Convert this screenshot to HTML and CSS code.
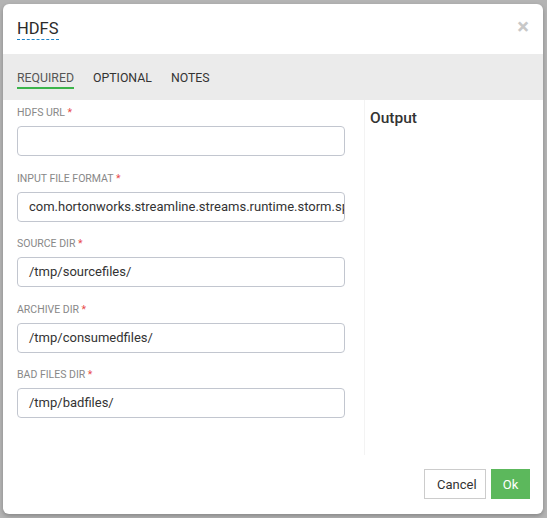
FILE: index.html
```html
<!DOCTYPE html>
<html>
<head>
<meta charset="utf-8">
<link rel="stylesheet" href="styles.css">
</head>
<body>
<div class="modal">
  <div class="modal-header">
    <span class="title">HDFS</span>
    <span class="close">&times;</span>
  </div>
  <div class="tabs">
    <span class="tab active">REQUIRED</span>
    <span class="tab">OPTIONAL</span>
    <span class="tab">NOTES</span>
  </div>
  <div class="content">
    <div class="form">
      <div class="field">
        <label>HDFS URL <span class="req">*</span></label>
        <div class="input"></div>
      </div>
      <div class="field">
        <label>INPUT FILE FORMAT <span class="req">*</span></label>
        <div class="input">com.hortonworks.streamline.streams.runtime.storm.spout.hdfs</div>
      </div>
      <div class="field">
        <label>SOURCE DIR <span class="req">*</span></label>
        <div class="input">/tmp/sourcefiles/</div>
      </div>
      <div class="field">
        <label>ARCHIVE DIR <span class="req">*</span></label>
        <div class="input">/tmp/consumedfiles/</div>
      </div>
      <div class="field">
        <label>BAD FILES DIR <span class="req">*</span></label>
        <div class="input">/tmp/badfiles/</div>
      </div>
    </div>
    <div class="output">
      <h4>Output</h4>
    </div>
  </div>
  <div class="footer">
    <button class="btn btn-default">Cancel</button>
    <button class="btn btn-success">Ok</button>
  </div>
</div>
</body>
</html>
```

FILE: styles.css
```css
html, body {
  margin: 0;
  padding: 0;
}
body {
  background: #b4b4b4;
  font-family: Roboto, "Liberation Sans", sans-serif;
  width: 547px;
  height: 518px;
  overflow: hidden;
}
.modal {
  margin: 4px 0 0 3px;
  width: 540px;
  height: 510px;
  background: #fff;
  border-radius: 6px;
  box-shadow: 0 2px 4px rgba(0,0,0,0.25);
  display: flex;
  flex-direction: column;
  overflow: hidden;
}
.modal-header {
  height: 50px;
  display: flex;
  align-items: flex-start;
  justify-content: space-between;
  padding: 0 14px;
}
.title {
  margin-top: 15px;
  font-size: 16.5px;
  color: #2b2b2b;
  line-height: 19px;
  border-bottom: 1px dashed #1b84c9;
  padding-bottom: 1px;
}
.close {
  margin-top: 12px;
  font-size: 22px;
  font-weight: bold;
  color: #c8c8c8;
  line-height: 22px;
}
.tabs {
  height: 46px;
  background: #ebebeb;
  display: flex;
  align-items: flex-start;
  padding: 0 14px;
  gap: 19px;
}
.tab {
  margin-top: 16px;
  font-size: 12.3px;
  color: #333;
  line-height: 16px;
  padding-bottom: 1px;
}
.tab.active {
  color: #555;
  border-bottom: 2px solid #3cb44b;
}
.content {
  display: flex;
  height: 355px;
}
.form {
  width: 328px;
  padding: 5px 19px 0 14px;
}
.field {
  margin-bottom: 14.5px;
}
.field label {
  display: block;
  font-size: 10.5px;
  color: #888;
  line-height: 15px;
  margin-bottom: 6px;
}
.req {
  color: #e84a4a;
}
.input {
  box-sizing: border-box;
  height: 30px;
  border: 1px solid #c2c6cf;
  border-radius: 4px;
  padding: 0 11px;
  font-size: 13px;
  color: #333;
  line-height: 28px;
  white-space: nowrap;
  overflow: hidden;
}
.output {
  flex: 1;
  border-left: 1px solid #f3f3f3;
  padding-left: 5px;
}
.output h4 {
  margin: 8px 0 0;
  font-size: 15.5px;
  font-weight: 500;
  color: #333;
  line-height: 20px;
}
.footer {
  flex: 1;
  display: flex;
  justify-content: flex-end;
  align-items: flex-start;
  padding: 14px 13px 0 0;
  gap: 5px;
}
.btn {
  font-family: Roboto, "Liberation Sans", sans-serif;
  font-size: 13px;
  height: 30px;
  border-radius: 0;
  padding: 0 12px;
  cursor: pointer;
}
.btn-default {
  background: #fff;
  border: 1px solid #ccc;
  color: #333;
  width: 62px;
}
.btn-success {
  background: #5cb85c;
  border: 1px solid #5cb85c;
  color: #fff;
  width: 39px;
  padding: 0;
}
```
